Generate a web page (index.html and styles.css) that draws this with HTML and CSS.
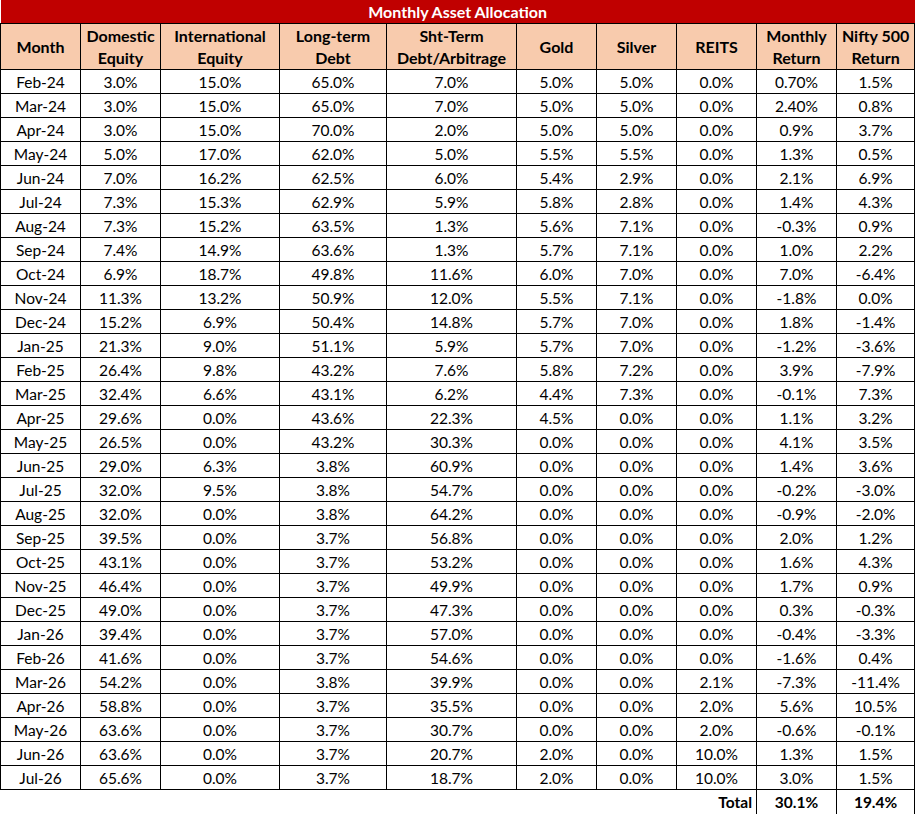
FILE: index.html
```html
<!DOCTYPE html>
<html>
<head>
<meta charset="utf-8">
<title>Monthly Asset Allocation</title>
<link rel="stylesheet" href="styles.css">
</head>
<body>
<table class="alloc">
<colgroup>
<col class="c80"><col class="c80"><col class="c119"><col class="c107"><col class="c130"><col class="c80"><col class="c80"><col class="c80"><col class="c80"><col class="c78">
</colgroup>
<thead>
<tr class="title"><th colspan="10">Monthly Asset Allocation</th></tr>
<tr class="head">
<th>Month</th><th>Domestic<br>Equity</th><th>International<br>Equity</th><th>Long-term<br>Debt</th><th>Sht-Term<br>Debt/Arbitrage</th><th>Gold</th><th>Silver</th><th>REITS</th><th>Monthly<br>Return</th><th>Nifty 500<br>Return</th>
</tr>
</thead>
<tbody>
<tr><td>Feb-24</td><td>3.0%</td><td>15.0%</td><td>65.0%</td><td>7.0%</td><td>5.0%</td><td>5.0%</td><td>0.0%</td><td>0.70%</td><td>1.5%</td></tr>
<tr><td>Mar-24</td><td>3.0%</td><td>15.0%</td><td>65.0%</td><td>7.0%</td><td>5.0%</td><td>5.0%</td><td>0.0%</td><td>2.40%</td><td>0.8%</td></tr>
<tr><td>Apr-24</td><td>3.0%</td><td>15.0%</td><td>70.0%</td><td>2.0%</td><td>5.0%</td><td>5.0%</td><td>0.0%</td><td>0.9%</td><td>3.7%</td></tr>
<tr><td>May-24</td><td>5.0%</td><td>17.0%</td><td>62.0%</td><td>5.0%</td><td>5.5%</td><td>5.5%</td><td>0.0%</td><td>1.3%</td><td>0.5%</td></tr>
<tr><td>Jun-24</td><td>7.0%</td><td>16.2%</td><td>62.5%</td><td>6.0%</td><td>5.4%</td><td>2.9%</td><td>0.0%</td><td>2.1%</td><td>6.9%</td></tr>
<tr><td>Jul-24</td><td>7.3%</td><td>15.3%</td><td>62.9%</td><td>5.9%</td><td>5.8%</td><td>2.8%</td><td>0.0%</td><td>1.4%</td><td>4.3%</td></tr>
<tr><td>Aug-24</td><td>7.3%</td><td>15.2%</td><td>63.5%</td><td>1.3%</td><td>5.6%</td><td>7.1%</td><td>0.0%</td><td>-0.3%</td><td>0.9%</td></tr>
<tr><td>Sep-24</td><td>7.4%</td><td>14.9%</td><td>63.6%</td><td>1.3%</td><td>5.7%</td><td>7.1%</td><td>0.0%</td><td>1.0%</td><td>2.2%</td></tr>
<tr><td>Oct-24</td><td>6.9%</td><td>18.7%</td><td>49.8%</td><td>11.6%</td><td>6.0%</td><td>7.0%</td><td>0.0%</td><td>7.0%</td><td>-6.4%</td></tr>
<tr><td>Nov-24</td><td>11.3%</td><td>13.2%</td><td>50.9%</td><td>12.0%</td><td>5.5%</td><td>7.1%</td><td>0.0%</td><td>-1.8%</td><td>0.0%</td></tr>
<tr><td>Dec-24</td><td>15.2%</td><td>6.9%</td><td>50.4%</td><td>14.8%</td><td>5.7%</td><td>7.0%</td><td>0.0%</td><td>1.8%</td><td>-1.4%</td></tr>
<tr><td>Jan-25</td><td>21.3%</td><td>9.0%</td><td>51.1%</td><td>5.9%</td><td>5.7%</td><td>7.0%</td><td>0.0%</td><td>-1.2%</td><td>-3.6%</td></tr>
<tr><td>Feb-25</td><td>26.4%</td><td>9.8%</td><td>43.2%</td><td>7.6%</td><td>5.8%</td><td>7.2%</td><td>0.0%</td><td>3.9%</td><td>-7.9%</td></tr>
<tr><td>Mar-25</td><td>32.4%</td><td>6.6%</td><td>43.1%</td><td>6.2%</td><td>4.4%</td><td>7.3%</td><td>0.0%</td><td>-0.1%</td><td>7.3%</td></tr>
<tr><td>Apr-25</td><td>29.6%</td><td>0.0%</td><td>43.6%</td><td>22.3%</td><td>4.5%</td><td>0.0%</td><td>0.0%</td><td>1.1%</td><td>3.2%</td></tr>
<tr><td>May-25</td><td>26.5%</td><td>0.0%</td><td>43.2%</td><td>30.3%</td><td>0.0%</td><td>0.0%</td><td>0.0%</td><td>4.1%</td><td>3.5%</td></tr>
<tr><td>Jun-25</td><td>29.0%</td><td>6.3%</td><td>3.8%</td><td>60.9%</td><td>0.0%</td><td>0.0%</td><td>0.0%</td><td>1.4%</td><td>3.6%</td></tr>
<tr><td>Jul-25</td><td>32.0%</td><td>9.5%</td><td>3.8%</td><td>54.7%</td><td>0.0%</td><td>0.0%</td><td>0.0%</td><td>-0.2%</td><td>-3.0%</td></tr>
<tr><td>Aug-25</td><td>32.0%</td><td>0.0%</td><td>3.8%</td><td>64.2%</td><td>0.0%</td><td>0.0%</td><td>0.0%</td><td>-0.9%</td><td>-2.0%</td></tr>
<tr><td>Sep-25</td><td>39.5%</td><td>0.0%</td><td>3.7%</td><td>56.8%</td><td>0.0%</td><td>0.0%</td><td>0.0%</td><td>2.0%</td><td>1.2%</td></tr>
<tr><td>Oct-25</td><td>43.1%</td><td>0.0%</td><td>3.7%</td><td>53.2%</td><td>0.0%</td><td>0.0%</td><td>0.0%</td><td>1.6%</td><td>4.3%</td></tr>
<tr><td>Nov-25</td><td>46.4%</td><td>0.0%</td><td>3.7%</td><td>49.9%</td><td>0.0%</td><td>0.0%</td><td>0.0%</td><td>1.7%</td><td>0.9%</td></tr>
<tr><td>Dec-25</td><td>49.0%</td><td>0.0%</td><td>3.7%</td><td>47.3%</td><td>0.0%</td><td>0.0%</td><td>0.0%</td><td>0.3%</td><td>-0.3%</td></tr>
<tr><td>Jan-26</td><td>39.4%</td><td>0.0%</td><td>3.7%</td><td>57.0%</td><td>0.0%</td><td>0.0%</td><td>0.0%</td><td>-0.4%</td><td>-3.3%</td></tr>
<tr><td>Feb-26</td><td>41.6%</td><td>0.0%</td><td>3.7%</td><td>54.6%</td><td>0.0%</td><td>0.0%</td><td>0.0%</td><td>-1.6%</td><td>0.4%</td></tr>
<tr><td>Mar-26</td><td>54.2%</td><td>0.0%</td><td>3.8%</td><td>39.9%</td><td>0.0%</td><td>0.0%</td><td>2.1%</td><td>-7.3%</td><td>-11.4%</td></tr>
<tr><td>Apr-26</td><td>58.8%</td><td>0.0%</td><td>3.7%</td><td>35.5%</td><td>0.0%</td><td>0.0%</td><td>2.0%</td><td>5.6%</td><td>10.5%</td></tr>
<tr><td>May-26</td><td>63.6%</td><td>0.0%</td><td>3.7%</td><td>30.7%</td><td>0.0%</td><td>0.0%</td><td>2.0%</td><td>-0.6%</td><td>-0.1%</td></tr>
<tr><td>Jun-26</td><td>63.6%</td><td>0.0%</td><td>3.7%</td><td>20.7%</td><td>2.0%</td><td>0.0%</td><td>10.0%</td><td>1.3%</td><td>1.5%</td></tr>
<tr><td>Jul-26</td><td>65.6%</td><td>0.0%</td><td>3.7%</td><td>18.7%</td><td>2.0%</td><td>0.0%</td><td>10.0%</td><td>3.0%</td><td>1.5%</td></tr>
</tbody>
<tfoot>
<tr class="total"><td colspan="8" class="label">Total</td><td class="sum">30.1%</td><td class="sum">19.4%</td></tr>
</tfoot>
</table>
</body>
</html>
```

FILE: styles.css
```css
html, body {
  margin: 0;
  padding: 0;
  background: #ffffff;
}

body {
  font-family: Lato, "Noto Sans", "Liberation Sans", sans-serif;
  color: #000000;
}

.alloc {
  border-collapse: collapse;
  table-layout: fixed;
  width: 914px;
}

.c80 { width: 80px; }
.c119 { width: 119px; }
.c107 { width: 107px; }
.c130 { width: 130px; }
.c78 { width: 78px; }

.alloc th,
.alloc td {
  padding: 0;
  text-align: center;
  vertical-align: middle;
  font-size: 15.5px;
  border: 1px solid #000000;
  white-space: nowrap;
  overflow: hidden;
}

.alloc td {
  font-weight: 400;
  height: 23px;
  line-height: 18px;
}

.title th {
  background: #c00000;
  color: #ffffff;
  font-weight: 700;
  font-size: 16px;
  height: 23px;
  line-height: 18px;
  border-top: none;
  border-left: none;
  border-right: none;
}

.head th {
  background: #f8cbad;
  font-weight: 700;
  font-size: 16px;
  height: 45px;
  line-height: 22px;
}

.total td {
  font-weight: 700;
  height: 24px;
}

.total td.label {
  text-align: right;
  padding-right: 4px;
  border-left: none;
  border-bottom: none;
}

.total td.sum {
  border-bottom: none;
}
```
